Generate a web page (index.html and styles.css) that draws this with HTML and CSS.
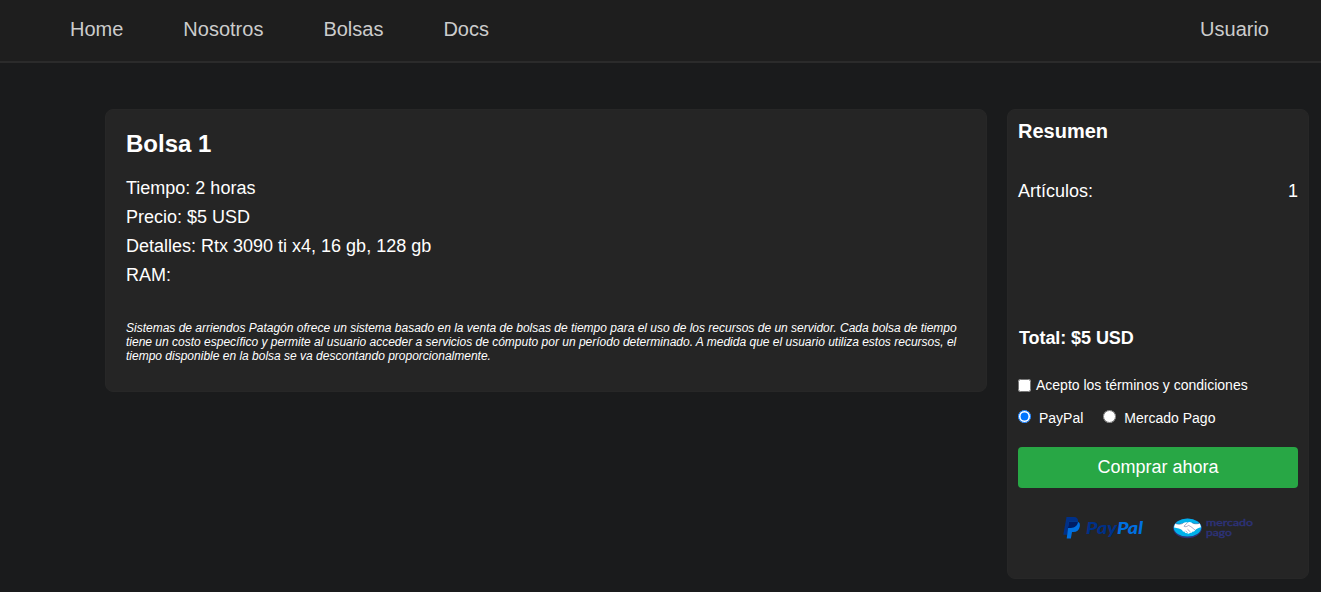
FILE: index.html
```html
<!DOCTYPE html>
<html lang="es">
<head>
<meta charset="utf-8">
<title>Bolsa 1</title>
<link rel="stylesheet" href="styles.css">
</head>
<body>
<nav class="navbar">
  <div class="nav-links">
    <a class="nav-link">Home</a>
    <a class="nav-link">Nosotros</a>
    <a class="nav-link">Bolsas</a>
    <a class="nav-link">Docs</a>
  </div>
  <a class="nav-link">Usuario</a>
</nav>
<main class="content">
  <section class="card product">
    <h2 class="product-title">Bolsa 1</h2>
    <div class="specs">
      <p>Tiempo: 2 horas</p>
      <p>Precio: $5 USD</p>
      <p>Detalles: Rtx 3090 ti x4, 16 gb, 128 gb</p>
      <p>RAM:</p>
    </div>
    <p class="description">Sistemas de arriendos Patagón ofrece un sistema basado en la venta de bolsas de tiempo para el uso de los recursos de un servidor. Cada bolsa de tiempo tiene un costo específico y permite al usuario acceder a servicios de cómputo por un período determinado. A medida que el usuario utiliza estos recursos, el tiempo disponible en la bolsa se va descontando proporcionalmente.</p>
  </section>
  <aside class="card summary">
    <h3 class="summary-title">Resumen</h3>
    <div class="items"><span>Artículos:</span><span>1</span></div>
    <p class="total">Total: $5 USD</p>
    <label class="terms"><input class="control" type="checkbox"><span>Acepto los términos y condiciones</span></label>
    <div class="methods">
      <label class="method"><input class="control" type="radio" name="pay" checked><span>PayPal</span></label>
      <label class="method"><input class="control" type="radio" name="pay"><span>Mercado Pago</span></label>
    </div>
    <button class="buy">Comprar ahora</button>
    <div class="logos">
      <svg class="logo" width="80" height="24" viewBox="0 0 80 24">
        <path fill="#003087" d="M3.500 1h6.800c3.600 0 5.200 2 4.700 5-.7 4.200-3.500 6-7.200 6H5.700L4.500 18.700H.3z"/>
        <path fill="#0070e0" d="M6 5.500h7.400c3 0 3.900 2.500 3.400 5-.7 3.700-3.200 5.600-6.300 5.600H9L7.900 22.500H3.700z"/>
        <path fill="#001c64" d="M6 5.500h7.400c.7 0 1.200.1 1.600.3-.6 4-3.300 6.200-7.200 6.200H4.900z"/>
        <text class="paypal-text" x="23" y="17.800" textLength="57" lengthAdjust="spacingAndGlyphs"><tspan fill="#003087">Pay</tspan><tspan fill="#0070e0">Pal</tspan></text>
      </svg>
      <svg class="logo" width="80" height="24" viewBox="0 0 80 24">
        <ellipse cx="14.500" cy="12.300" rx="14.300" ry="9.900" fill="#2d3277"/>
        <ellipse cx="14.500" cy="11.600" rx="13.800" ry="9" fill="#00b1ea"/>
        <path fill="#fff" d="M2.200 7.500c3.500 1.200 6 .8 8.100-.4 2-1.100 3-1 4.200-.5 1.300-.7 2.800-.7 4.700.3 2.500 1.200 5 1.200 7.600.3l1.200 4c-2.700.6-4.700 1.600-5.900 3-.4 1.200-1.700 1.600-2.400 1.400-.6 1.200-1.800 1.600-2.600 1.100-.9 1.300-2.600 1.200-3.100.3-1.500.5-2.400-.5-2.600-1.400-1.500.2-2.100-.7-2.100-1.400-1.700-1.500-4.700-2.400-8.300-2.800z"/>
        <path fill="none" stroke="#2d3277" stroke-width=".5" opacity=".8" d="M14.500 6.600l-3.500 3.600c1.500 1.100 3.300.1 4.500-.8 2.500 1 4.300 2.800 6.600 4.700M14.500 13.200l3 2.800M12.500 14.700l2.200 2.200M2.200 7.500c3.500 1.200 6 .8 8.100-.4M19.200 6.900c2.500 1.200 5 1.200 7.600.3"/>
        <text class="mercado-text" x="33" y="10.200" textLength="47" lengthAdjust="spacingAndGlyphs">mercado</text>
        <text class="mercado-text" x="33" y="20" textLength="26" lengthAdjust="spacingAndGlyphs">pago</text>
      </svg>
    </div>
  </aside>
</main>
</body>
</html>
```
FILE: styles.css
```css
* { box-sizing: border-box; }
body {
  margin: 0;
  min-height: 100vh;
  background: #1a1b1c;
  color: #fff;
  font-family: "Liberation Sans", Arial, sans-serif;
}
h2, h3, p { margin: 0; }
.navbar {
  display: flex;
  justify-content: space-between;
  height: 63px;
  padding: 17px 52px 0 70px;
  background: #1e1e1e;
  border-bottom: 2px solid #2b2b2b;
}
.nav-links { display: flex; gap: 60px; }
.nav-link { color: #ccc; font-size: 20px; line-height: 24px; }
.content {
  display: flex;
  align-items: flex-start;
  gap: 20px;
  padding: 46px 12px 0 105px;
}
.card {
  background: #252525;
  border: 1px solid #272727;
  border-radius: 8px;
}
.product { width: 882px; height: 283px; padding: 20px; }
.product-title { font-size: 24px; line-height: 27px; }
.specs { margin-top: 17px; font-size: 18px; line-height: 29px; }
.description {
  margin-top: 31px;
  font-size: 12px;
  font-style: italic;
  line-height: 14px;
}
.summary { width: 302px; height: 470px; padding: 10px; }
.summary-title { font-size: 20px; line-height: 23px; }
.items {
  display: flex;
  justify-content: space-between;
  margin-top: 38px;
  font-size: 18px;
  line-height: 20px;
}
.total {
  margin: 127px 0 0 1px;
  font-size: 18px;
  font-weight: bold;
  line-height: 20px;
  letter-spacing: -0.08px;
}
.control { width: 13px; height: 13px; margin: 0; }
.terms {
  display: flex;
  align-items: center;
  gap: 5px;
  margin-top: 29px;
  font-size: 14px;
  line-height: 16px;
}
.methods { display: flex; gap: 20px; margin-top: 17px; }
.method {
  display: flex;
  align-items: flex-start;
  gap: 8px;
  font-size: 14px;
  line-height: 16px;
}
.buy {
  display: block;
  width: 100%;
  height: 41px;
  margin-top: 21px;
  padding: 0;
  border: 0;
  border-radius: 4px;
  background: #28a745;
  color: #fff;
  font: 18px "Liberation Sans", Arial, sans-serif;
}
.logos { display: flex; justify-content: center; gap: 30px; margin-top: 28px; }
.logo { display: block; }
.paypal-text { font: italic 900 17px "Lato", sans-serif; }
.mercado-text {
  font: 9.5px "Lato", sans-serif;
  fill: #2d3277;
  stroke: #2d3277;
  stroke-width: 0.4px;
}
```
